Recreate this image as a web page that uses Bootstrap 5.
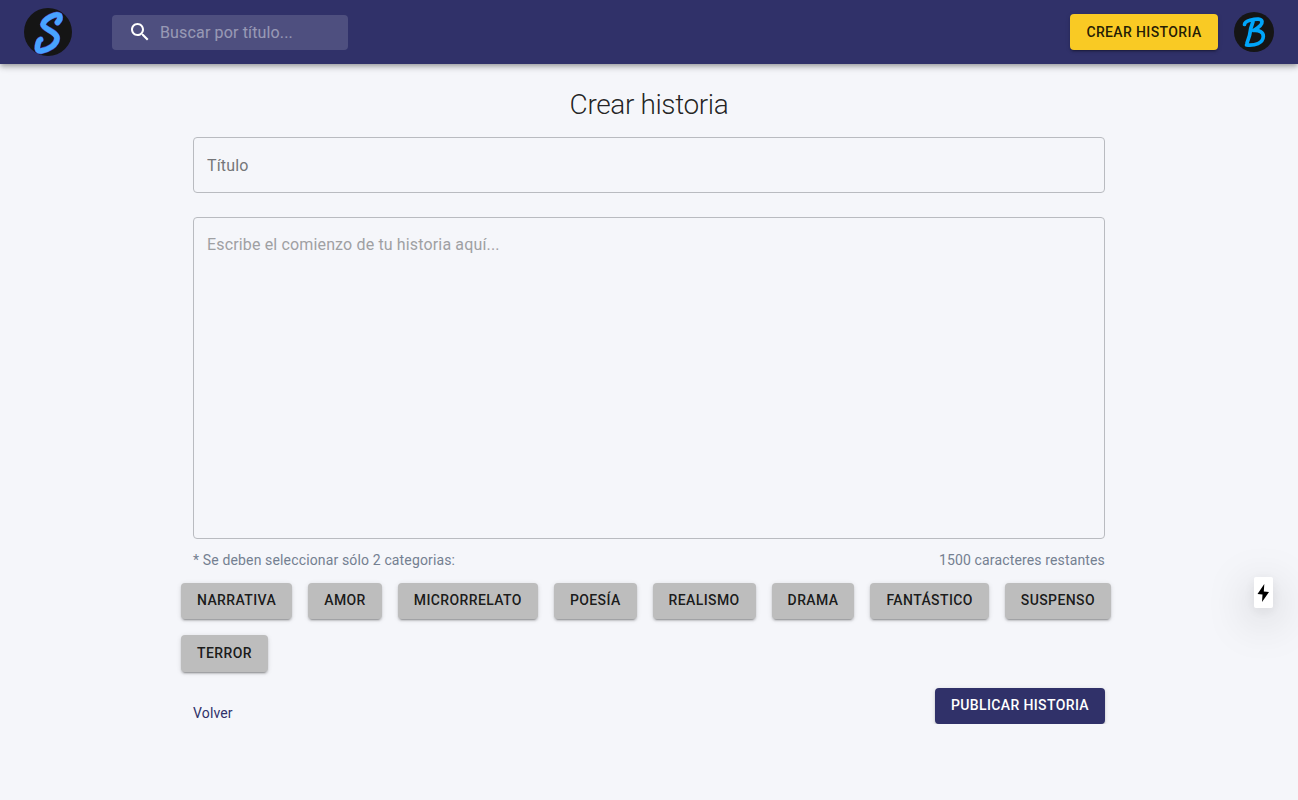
<!DOCTYPE html>
<html lang="es">
<head>
<meta charset="utf-8">
<meta name="viewport" content="width=device-width, initial-scale=1">
<title>Crear historia</title>
<link rel="stylesheet" href="https://cdn.jsdelivr.net/npm/bootstrap@5.3.0/dist/css/bootstrap.min.css">
<style>
  body { font-family: Roboto, "Liberation Sans", sans-serif; background: #f5f6fa; color: rgba(0,0,0,.87); letter-spacing: .00938em; }
  .topbar { height: 64px; background: #303169; padding: 0 24px; box-shadow: 0 2px 4px -1px rgba(0,0,0,.2), 0 4px 5px rgba(0,0,0,.14), 0 1px 10px rgba(0,0,0,.12); }
  .search { width: 236px; height: 35px; margin-left: 40px; padding-left: 16px; background: rgba(255,255,255,.15); border-radius: 4px; }
  .search input { width: 188px; margin-left: 8px; padding: 0; color: #fff; border: 0; background: none; outline: 0; letter-spacing: inherit; line-height: 19px; }
  .search input::placeholder { color: #fff; opacity: .42; }
  .btn-raised { font-size: 14px; font-weight: 500; line-height: 24px; letter-spacing: .0268em; padding: 6px 16px; border: 0; border-radius: 4px; text-transform: uppercase; box-shadow: 0 3px 1px -2px rgba(0,0,0,.2), 0 2px 2px rgba(0,0,0,.14), 0 1px 5px rgba(0,0,0,.12); }
  .btn-gold { --bs-btn-color: rgba(0,0,0,.87); --bs-btn-bg: #f9ca24; --bs-btn-hover-bg: #e3b615; width: 148px; }
  .btn-navy { --bs-btn-color: #fff; --bs-btn-bg: #303169; --bs-btn-hover-color: #fff; --bs-btn-hover-bg: #232450; padding-top: 5px; padding-bottom: 7px; }
  .btn-category { --bs-btn-color: rgba(0,0,0,.87); --bs-btn-bg: #bdbdbd; --bs-btn-hover-bg: #aaa; height: 36.5px; letter-spacing: .0279em; padding-top: 4.7px; padding-bottom: 6.3px; }
  .story-form { width: 912px; padding-top: 24px; }
  .page-title { font-size: 28px; font-weight: 300; line-height: 33px; letter-spacing: -.0135em; margin-bottom: 16px; }
  .field { background: transparent; border: 1px solid #b9bbc0; border-radius: 4px; padding: 0 13px; letter-spacing: .00938em; color: inherit; resize: none; }
  .field-title { height: 56px; margin-bottom: 24px; }
  .field-title::placeholder { color: #757679; opacity: 1; }
  .field-story { height: 322px; padding-top: 17px; line-height: 19px; }
  .field-story::placeholder { color: #9fa0a3; opacity: 1; }
  .hint { font-size: 14px; line-height: 20px; letter-spacing: .0104em; color: #748091; margin-top: 11px; }
  .categories { margin: 12.9px -12px 16px; }
  .back-link { font-size: 14px; line-height: 20px; color: #303169; margin-top: 15px; }
  .quick { right: 25px; top: 577px; width: 19px; height: 31px; border-radius: 2px; box-shadow: 0 11px 45px rgba(0,0,0,.28), 0 3px 14px rgba(0,0,0,.08); }
</style>
</head>
<body>
<header class="topbar d-flex align-items-center">
  <a href="#" class="d-flex" aria-label="Inicio">
    <svg width="48" height="48" viewBox="0 0 48 48" fill="none" stroke-linecap="round" stroke-linejoin="round">
      <circle cx="24" cy="24" r="24" fill="#151515"/>
      <path stroke="#4936aa" stroke-width="6.4" d="M33.500 14.500Q37 11 35.500 7.500C32 4.500 20 11 19 16.500C19 21 33.500 24 33 30.500C32.500 37 25 41.500 17 43Q12.500 43.500 13.500 38Q14.500 32 16.500 31.500"/>
      <path stroke="#47a3ff" stroke-width="5.4" d="M33.500 14.500Q37 11 35.500 7.500C32 4.500 20 11 19 16.500C19 21 33.500 24 33 30.500C32.500 37 25 41.500 17 43Q12.500 43.500 13.500 38Q14.500 32 16.500 31.500"/>
    </svg>
  </a>
  <div class="search d-flex align-items-center">
    <svg width="24" height="24" viewBox="0 0 24 24" fill="#fff"><path d="M15.5 14h-.79l-.28-.27C15.41 12.59 16 11.11 16 9.5 16 5.91 13.09 3 9.5 3S3 5.91 3 9.5 5.91 16 9.5 16c1.61 0 3.09-.59 4.23-1.57l.27.28v.79l5 4.99L20.49 19l-4.99-5zm-6 0C7.01 14 5 11.99 5 9.5S7.01 5 9.5 5 14 7.01 14 9.5 11.99 14 9.5 14z"/></svg>
    <input type="text" placeholder="Buscar por título...">
  </div>
  <button class="btn btn-gold btn-raised ms-auto me-3">Crear historia</button>
  <a href="#" class="d-flex" aria-label="Perfil">
    <svg width="40" height="40" viewBox="0 0 40 40" fill="none" stroke-linecap="round" stroke-linejoin="round">
      <circle cx="20" cy="20" r="20" fill="#151515"/>
      <path stroke="#00a5fa" stroke-width="3.700" d="M10.500 12.500Q11 9.500 16 8.300Q27 5.500 28 9.500C28.500 13 23 16.500 19.500 18.500C25 18 29.500 20 29.300 24.500C29 31 21 34 12.500 33M19 9.500Q16.500 16 15.500 23.500L13 31"/>
    </svg>
  </a>
</header>

<main class="story-form mx-auto">
  <h1 class="page-title text-center">Crear historia</h1>
  <input type="text" class="field field-title d-block w-100" placeholder="Título">
  <textarea class="field field-story d-block w-100" placeholder="Escribe el comienzo de tu historia aquí..."></textarea>
  <div class="hint d-flex justify-content-between">
    <span>* Se deben seleccionar sólo 2 categorias:</span>
    <span>1500 caracteres restantes</span>
  </div>
  <div class="categories d-flex flex-wrap gap-3">
    <button class="btn btn-category btn-raised">Narrativa</button>
    <button class="btn btn-category btn-raised">Amor</button>
    <button class="btn btn-category btn-raised">Microrrelato</button>
    <button class="btn btn-category btn-raised">Poesía</button>
    <button class="btn btn-category btn-raised">Realismo</button>
    <button class="btn btn-category btn-raised">Drama</button>
    <button class="btn btn-category btn-raised">Fantástico</button>
    <button class="btn btn-category btn-raised">Suspenso</button>
    <button class="btn btn-category btn-raised">Terror</button>
  </div>
  <div class="d-flex justify-content-between align-items-start">
    <a href="#" class="back-link text-decoration-none">Volver</a>
    <button class="btn btn-navy btn-raised">Publicar historia</button>
  </div>
</main>

<button class="quick position-fixed bg-white border-0 p-0 d-flex align-items-center justify-content-center" aria-label="Acciones rápidas">
  <svg width="13" height="18" viewBox="0 0 13 18"><path d="M7.300 0L.5 10l5 .6L5 18L12 8L6.800 7.400z"/></svg>
</button>
<script src="https://cdn.jsdelivr.net/npm/bootstrap@5.3.0/dist/js/bootstrap.bundle.min.js"></script>
</body>
</html>
